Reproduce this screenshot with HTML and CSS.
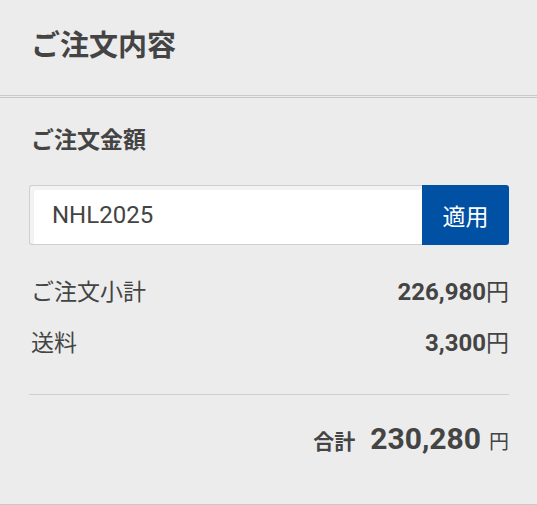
FILE: index.html
```html
<!DOCTYPE html>
<html lang="ja">
<head>
<meta charset="utf-8">
<link rel="stylesheet" href="styles.css">
</head>
<body>
<section class="panel">
  <header class="panel-head">
    <h1 class="panel-title">ご注文内容</h1>
  </header>
  <div class="panel-body">
    <h2 class="section-title">ご注文金額</h2>
    <form class="coupon">
      <input class="coupon-input" type="text" value="NHL2025">
      <button class="coupon-btn" type="button">適用</button>
    </form>
    <dl class="rows">
      <div class="row">
        <dt>ご注文小計</dt>
        <dd>226,980<span class="yen">円</span></dd>
      </div>
      <div class="row">
        <dt>送料</dt>
        <dd>3,300<span class="yen">円</span></dd>
      </div>
    </dl>
    <div class="total">
      <span class="total-label">合計</span>
      <span class="total-value">230,280</span>
      <span class="total-yen">円</span>
    </div>
  </div>
</section>
</body>
</html>
```
FILE: styles.css
```css
* { box-sizing: border-box; }
html, body { margin: 0; padding: 0; }
body {
  background: #ececec;
  font-family: Roboto, "Noto Sans CJK JP", sans-serif;
  color: #444;
}
.panel { width: 537px; }
.panel-head {
  height: 98px;
  padding: 25px 31px 0;
  border-bottom: 3px double #c8c8c8;
}
.panel-title {
  margin: 0;
  font-size: 29px;
  font-weight: 700;
  line-height: 42px;
  color: #444;
}
.panel-body {
  padding: 26px 28px 0 29px;
  border-bottom: 1px solid #c8c8c8;
  height: 407px;
}
.section-title {
  margin: 0 0 0 2px;
  font-size: 23px;
  font-weight: 700;
  line-height: 34px;
  color: #444;
}
.coupon {
  display: flex;
  margin-top: 27px;
  height: 60px;
}
.coupon-input {
  flex: 1;
  min-width: 0;
  border: 1px solid #cfcfcf;
  border-right: none;
  border-radius: 3px 0 0 3px;
  background: #fff;
  box-shadow: inset 4px 4px 0 #f3f3f3;
  padding: 0 0 0 22px;
  font-family: Roboto, "Noto Sans CJK JP", sans-serif;
  font-size: 24px;
  color: #444;
  outline: none;
}
.coupon-btn {
  width: 87px;
  border: none;
  border-radius: 0 3px 3px 0;
  background: #0050a4;
  color: #fff;
  font-family: Roboto, "Noto Sans CJK JP", sans-serif;
  font-size: 23px;
  padding: 0;
}
.rows { margin: 30px 0 0; }
.row {
  display: flex;
  justify-content: space-between;
  align-items: baseline;
  height: 51px;
  line-height: 34px;
}
.row dt {
  margin-left: 2px;
  font-size: 23px;
}
.row dd {
  margin: 0;
  font-size: 24px;
  font-weight: 700;
}
.yen { font-weight: 400; font-size: 23px; }
.total {
  border-top: 1px solid #cfcfcf;
  margin-top: 17px;
  padding-top: 24px;
  display: flex;
  justify-content: flex-end;
  align-items: baseline;
  line-height: 40px;
}
.total-label {
  font-size: 21px;
  font-weight: 700;
  margin-right: 15px;
}
.total-value {
  font-size: 30px;
  font-weight: 700;
  margin-right: 8px;
}
.total-yen {
  font-size: 20px;
  font-weight: 400;
}
```
